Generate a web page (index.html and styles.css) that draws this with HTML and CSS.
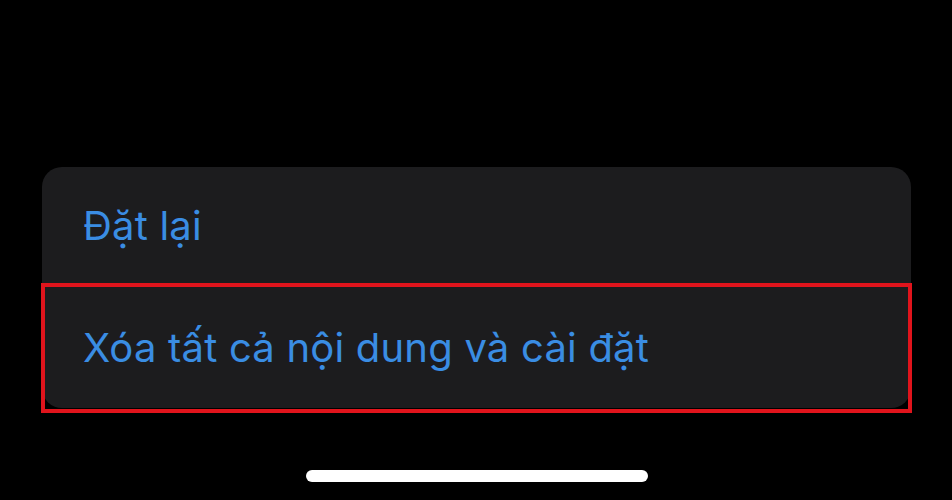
FILE: index.html
```html
<!DOCTYPE html>
<html lang="vi">
<head>
    <meta charset="UTF-8">
    <meta name="viewport" content="width=device-width, initial-scale=1.0">
    <title>Đặt lại</title>
    <link rel="stylesheet" href="styles.css">
</head>
<body>
    <div class="screen">
        <div class="card">
            <div class="row">Đặt lại</div>
            <div class="row highlighted">Xóa tất cả nội dung và cài đặt</div>
        </div>
        <div class="home-indicator"></div>
    </div>
</body>
</html>
```

FILE: styles.css
```css
html, body {
    margin: 0;
    background: #000;
}

.screen {
    width: 952px;
    height: 500px;
    box-sizing: border-box;
    padding: 167px 41px 0 42px;
    display: flex;
    flex-direction: column;
    align-items: center;
    font-family: Inter, "Noto Sans", sans-serif;
}

.card {
    width: 100%;
    background: #1c1c1e;
    border-radius: 20px;
}

.row {
    height: 120px;
    box-sizing: border-box;
    padding: 39px 0 0 41px;
    font-size: 40px;
    line-height: 40px;
    color: #3a8de3;
    letter-spacing: 0.2px;
}

.highlighted {
    position: relative;
    height: 121px;
    padding-top: 41px;
}

/* red annotation box drawn over the row */
.highlighted::after {
    content: "";
    position: absolute;
    top: -4px;
    bottom: -5px;
    left: -1px;
    right: -1px;
    border: 4px solid #e0141c;
}

.home-indicator {
    width: 342px;
    height: 12px;
    margin-top: 62px;
    margin-left: 1px;
    border-radius: 6px;
    background: #fff;
}
```
